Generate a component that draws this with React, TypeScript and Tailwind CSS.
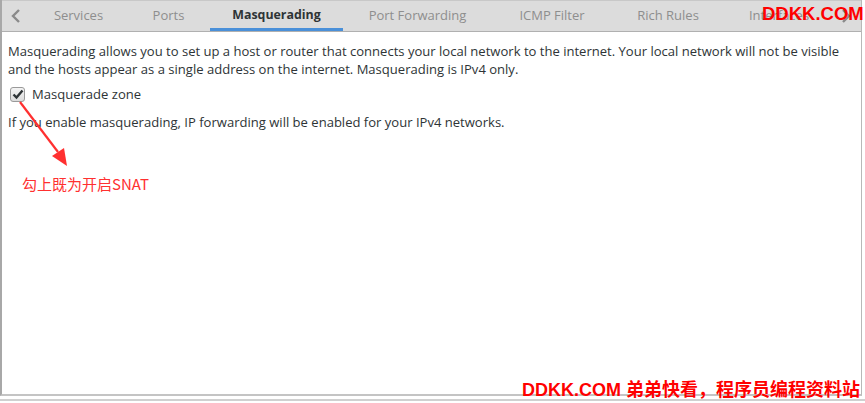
import React from "react";

const tabs = [
  { label: "Services", w: "w-[97px]" },
  { label: "Ports", w: "w-[83px]" },
  { label: "Masquerading", w: "w-[133px]", active: true },
  { label: "Port Forwarding", w: "w-[149px]" },
  { label: "ICMP Filter", w: "w-[120px]" },
  { label: "Rich Rules", w: "w-[112px]" },
  { label: "Interfaces", w: "w-[110px]" },
];

export default function App() {
  return (
    <div
      className="relative w-[865px] h-[403px] bg-white overflow-hidden text-[#2e3436]"
      style={{ fontFamily: '"Open Sans", "DejaVu Sans", sans-serif' }}
    >
      <div className="w-[862px] h-[396px] border-l-2 border-r border-b-2 border-l-[#a8a8a8] border-r-[#b8b8b8] border-b-[#c4c4c4] flex flex-col">
        {/* tab bar */}
        <div className="h-[32px] bg-[#dcdcdc] border-t border-t-[#c8c8c8] border-b border-b-[#b0b0b0] flex items-stretch overflow-hidden">
          <div className="w-[28px] shrink-0 flex items-center justify-center">
            <svg width="12" height="14" viewBox="0 0 12 14">
              <path d="M9 1 L3 7 L9 13" fill="none" stroke="#8a8a8a" strokeWidth="2.4" />
            </svg>
          </div>
          {tabs.map((t) => (
            <div
              key={t.label}
              className={`${t.w} shrink-0 flex items-center justify-center pb-[1px] whitespace-nowrap ${
                t.active
                  ? "text-[12.4px] font-bold text-[#2e3436] border-b-[3px] border-b-[#4a90d9] pt-[3px]"
                  : "text-[13px] text-[#8e8e8e]"
              }`}
            >
              {t.label}
            </div>
          ))}
          <div className="flex-1 flex items-center justify-end pr-[10px]">
            <svg width="10" height="14" viewBox="0 0 10 14">
              <path d="M2 1 L8 7 L2 13" fill="none" stroke="#8a8a8a" strokeWidth="2.4" />
            </svg>
          </div>
        </div>

        {/* content */}
        <div className="flex-1 px-[6px] pt-[10px] text-[13.05px] leading-[18px] text-[#2e3436] whitespace-nowrap">
          <p>
            Masquerading allows you to set up a host or router that connects your local network to the internet. Your local network will not be visible
            <br />
            and the hosts appear as a single address on the internet. Masquerading is IPv4 only.
          </p>
          <div className="flex items-center gap-[7px] mt-[7px] ml-[2px]">
            <div className="w-[15px] h-[15px] rounded-[3px] border border-[#9a9a9a] bg-gradient-to-b from-[#f4f4f4] to-[#dcdcdc] flex items-center justify-center">
              <svg width="12" height="11" viewBox="0 0 12 11">
                <path d="M1.5 5.5 L4.5 8.5 L10.5 1.5" fill="none" stroke="#2e3436" strokeWidth="2.4" />
              </svg>
            </div>
            <span>Masquerade zone</span>
          </div>
          <p className="mt-[10px]">If you enable masquerading, IP forwarding will be enabled for your IPv4 networks.</p>
        </div>
      </div>
      <div className="absolute left-0 right-0 top-[399px] h-[2px] bg-[#d0d0d0]" />

      {/* annotation arrow */}
      <svg className="absolute left-0 top-0" width="865" height="403">
        <line x1="20" y1="102" x2="58" y2="152" stroke="#ff3030" strokeWidth="2.2" />
        <polygon points="52,156 67,166 64,148" fill="#ff3030" />
      </svg>
      <div
        className="absolute left-[22px] top-[173px] text-[15px] text-[#ff3030]"
        style={{ fontFamily: '"Noto Sans CJK SC", sans-serif' }}
      >
        勾上既为开启SNAT
      </div>

      {/* watermarks */}
      <div
        className="absolute left-[762px] top-[5px] text-[18.5px] font-bold text-[#ff0000] leading-none"
        style={{ fontFamily: '"Liberation Sans", Arial, sans-serif' }}
      >
        DDKK.COM
      </div>
      <div
        className="absolute left-[522px] top-[381px] text-[18px] font-bold text-[#ff0000] leading-none whitespace-nowrap"
        style={{ fontFamily: '"Liberation Sans", "Noto Sans CJK SC", sans-serif' }}
      >
        DDKK.COM 弟弟快看，程序员编程资料站
      </div>
    </div>
  );
}
